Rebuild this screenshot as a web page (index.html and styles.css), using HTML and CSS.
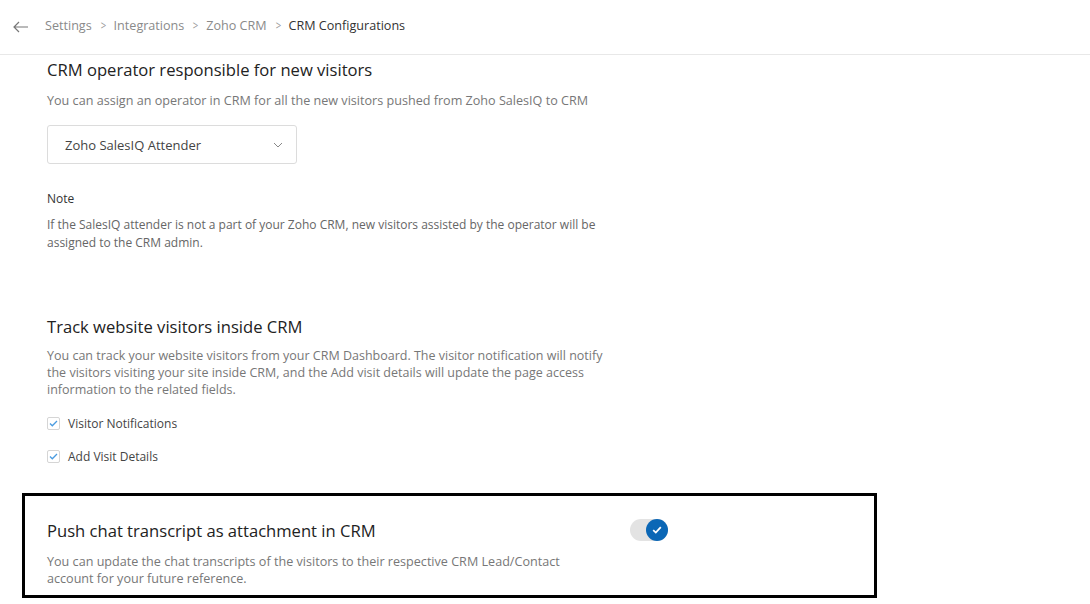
FILE: index.html
```html
<!DOCTYPE html>
<html>
<head>
<meta charset="utf-8">
<link rel="stylesheet" href="styles.css">
</head>
<body>
<header class="topbar">
  <svg class="back" width="16" height="12" viewBox="0 0 16 12"><path d="M15 6H1.5M6 1L1 6l5 5" fill="none" stroke="#777" stroke-width="1.2"/></svg>
  <nav class="crumbs">
    <span class="crumb">Settings</span><span class="sep">&gt;</span>
    <span class="crumb">Integrations</span><span class="sep">&gt;</span>
    <span class="crumb">Zoho CRM</span><span class="sep">&gt;</span>
    <span class="crumb current">CRM Configurations</span>
  </nav>
</header>
<main class="content">
  <section class="block first">
    <h2 class="title">CRM operator responsible for new visitors</h2>
    <p class="desc">You can assign an operator in CRM for all the new visitors pushed from Zoho SalesIQ to CRM</p>
    <div class="select">
      <span>Zoho SalesIQ Attender</span>
      <svg width="10" height="6" viewBox="0 0 10 6"><path d="M1 1l4 4 4-4" fill="none" stroke="#888" stroke-width="1"/></svg>
    </div>
    <div class="note-label">Note</div>
    <p class="note">If the SalesIQ attender is not a part of your Zoho CRM, new visitors assisted by the operator will be assigned to the CRM admin.</p>
  </section>
  <section class="block second">
    <h2 class="title">Track website visitors inside CRM</h2>
    <p class="desc long">You can track your website visitors from your CRM Dashboard. The visitor notification will notify the visitors visiting your site inside CRM, and the Add visit details will update the page access information to the related fields.</p>
    <label class="check first-check"><span class="box"><svg width="9" height="7" viewBox="0 0 9 7"><path d="M1 3.5l2.3 2.3L8 1" fill="none" stroke="#4a9be0" stroke-width="1.3"/></svg></span>Visitor Notifications</label>
    <label class="check"><span class="box"><svg width="9" height="7" viewBox="0 0 9 7"><path d="M1 3.5l2.3 2.3L8 1" fill="none" stroke="#4a9be0" stroke-width="1.3"/></svg></span>Add Visit Details</label>
  </section>
  <section class="highlight">
    <div class="hl-row">
      <div class="hl-text">
        <h2 class="title">Push chat transcript as attachment in CRM</h2>
        <p class="desc narrow">You can update the chat transcripts of the visitors to their respective CRM Lead/Contact account for your future reference.</p>
      </div>
      <div class="toggle">
        <span class="knob"><svg width="10" height="8" viewBox="0 0 10 8"><path d="M1.2 4.2l2.6 2.4L8.8 1.2" fill="none" stroke="#fff" stroke-width="1.8"/></svg></span>
      </div>
    </div>
  </section>
</main>
</body>
</html>
```
FILE: styles.css
```css
* { box-sizing: border-box; }
body {
  margin: 0;
  font-family: "Open Sans", "Liberation Sans", sans-serif;
  color: #333;
  background: #fff;
  width: 1090px;
  height: 604px;
  overflow: hidden;
}
.topbar {
  height: 55px;
  border-bottom: 1px solid #e8e8e8;
  display: flex;
  align-items: center;
  padding: 0 0 3px 13px;
}
.back { margin-right: 16px; margin-top: 2px; }
.crumbs { display: flex; align-items: center; font-size: 12.6px; }
.crumb { color: #8a8a8a; }
.crumb.current { color: #333; }
.sep { color: #999; margin: 0 7px 0 8px; font-size: 12px; transform: scaleX(0.8); }
.content { padding-left: 47px; }
.block.first { padding-top: 4px; }
.title {
  margin: 0;
  font-weight: 400;
  font-size: 16.6px;
  color: #222;
  line-height: 22px;
}
.desc {
  margin: 11px 0 0;
  font-size: 12.6px;
  color: #777;
  line-height: 17px;
}
.desc.long { width: 572px; font-size: 12.5px; margin-top: 9px; }
.select {
  margin-top: 16px;
  width: 250px;
  height: 39px;
  border: 1px solid #dcdcdc;
  border-radius: 3px;
  display: flex;
  align-items: center;
  justify-content: space-between;
  padding: 0 13px 0 17px;
  font-size: 13px;
  color: #444;
}
.note-label { margin-top: 27px; font-size: 12px; color: #333; line-height: 16px; }
.note { margin: 9px 0 0; font-size: 12px; color: #666; line-height: 18px; width: 575px; }
.block.second { margin-top: 64px; }
.check {
  display: flex;
  align-items: center;
  font-size: 12px;
  color: #444;
  height: 17px;
  margin-top: 16px;
}
.check.first-check { margin-top: 17px; }
.box {
  width: 13px; height: 13px;
  border: 1px solid #d5d5d5;
  border-radius: 2px;
  display: flex; align-items: center; justify-content: center;
  margin-right: 8px;
}
.highlight {
  margin: 28px 0 0 -25px;
  width: 855px;
  height: 105px;
  border: 3px solid #000;
  padding: 24px 0 0 22px;
}
.hl-row { display: flex; align-items: flex-start; }
.hl-text { width: 583px; }
.desc.narrow { width: 525px; margin-top: 11px; }
.toggle {
  margin-top: -1px;
  width: 38px; height: 22px;
  border-radius: 11px;
  background: #e3e3e3;
  position: relative;
}
.knob {
  position: absolute; right: 0; top: 0;
  width: 22px; height: 22px; border-radius: 50%;
  background: #0b67b6;
  display: flex; align-items: center; justify-content: center;
}
```
